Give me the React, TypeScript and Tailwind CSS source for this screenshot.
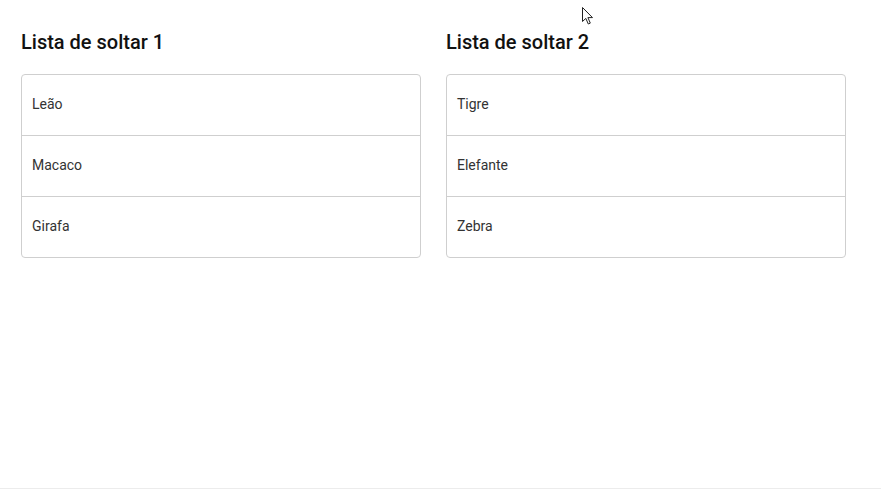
const lists = [
  { title: "Lista de soltar 1", items: ["Leão", "Macaco", "Girafa"] },
  { title: "Lista de soltar 2", items: ["Tigre", "Elefante", "Zebra"] },
];

function Cursor() {
  return (
    <svg
      className="absolute left-[581px] top-[6px]"
      width="14"
      height="20"
      viewBox="0 0 14 20"
    >
      <path
        d="M1.5 1.5 L1.5 15.5 L4.8 12.4 L7.3 18 L9.3 17.1 L6.9 11.6 L11.5 11.6 Z"
        fill="#fff"
        stroke="#222"
        strokeWidth="1"
        strokeLinejoin="round"
      />
    </svg>
  );
}

export default function App() {
  return (
    <div
      className="relative h-[489px] border-b border-[#ececec] bg-white"
      style={{ fontFamily: "Roboto, 'Liberation Sans', sans-serif" }}
    >
      <Cursor />
      <div className="flex gap-[25px] px-[21px] pt-[30px]">
        {lists.map((list) => (
          <div key={list.title} className="w-[400px]">
            <h2 className="mb-[20px] text-[20px] leading-[24px] font-medium text-[#111]">
              {list.title}
            </h2>
            <div className="overflow-hidden rounded-[4px] border border-[#cfcfcf]">
              {list.items.map((item, i) => (
                <div
                  key={item}
                  className={`flex items-center px-[10px] pb-[2px] text-[14px] text-[#333] ${
                    i > 0 ? "h-[61px] border-t border-[#cfcfcf]" : "h-[60px]"
                  }`}
                >
                  {item}
                </div>
              ))}
            </div>
          </div>
        ))}
      </div>
    </div>
  );
}
